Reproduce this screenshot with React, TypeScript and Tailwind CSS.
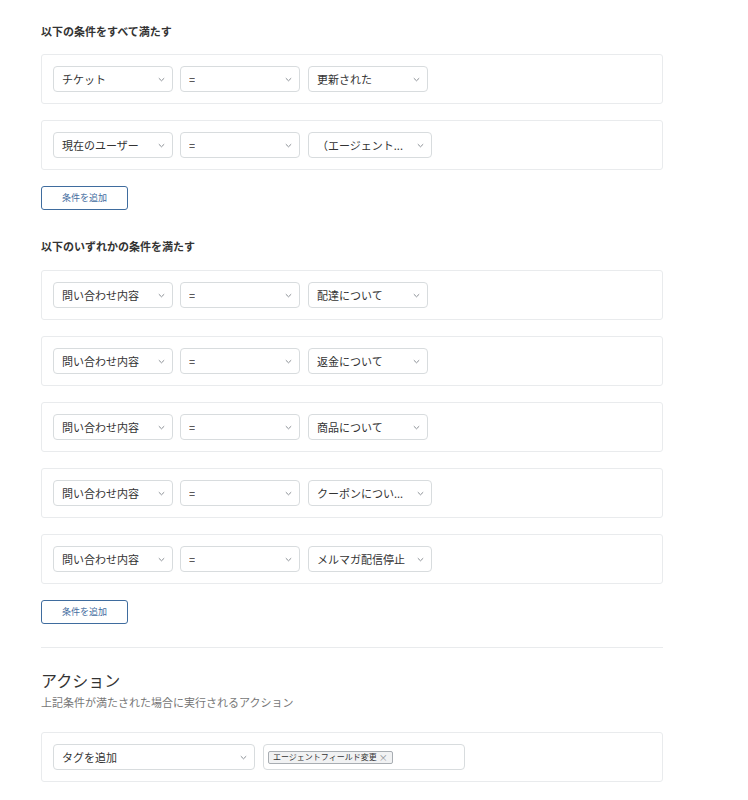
import React from "react";

const font = { fontFamily: '"Noto Sans CJK JP", "Noto Sans", sans-serif' };

function Chevron() {
  return (
    <svg width="7" height="5" viewBox="0 0 7 5" fill="none" className="shrink-0">
      <path d="M0.8 1.2 L3.5 3.8 L6.2 1.2" stroke="#8a8f94" strokeWidth="1" />
    </svg>
  );
}

function Select({ label, width, className = "" }: { label: string; width: string; className?: string }) {
  return (
    <div
      className={`flex h-[26px] items-center justify-between rounded-[4px] border border-[#d8dcde] bg-white pl-2 pr-[7px] text-[11px] text-[#333] ${width} ${className}`}
    >
      <span className="truncate leading-4">{label}</span>
      <Chevron />
    </div>
  );
}

function ConditionRow({ field, value, wide }: { field: string; value: string; wide?: boolean }) {
  return (
    <div className="flex items-center rounded-[3px] border border-[#e9ebed] bg-white px-[11px] py-[11px]">
      <Select label={field} width="w-[120px]" />
      <Select label="=" width="w-[120px]" className="ml-[7px]" />
      <Select label={value} width={wide ? "w-[124px]" : "w-[120px]"} className="ml-2" />
    </div>
  );
}

function AddButton() {
  return (
    <button className="flex h-[24px] w-[87px] items-center justify-center rounded-[3px] border border-[#3f6c9e] bg-white text-[9px] text-[#3f6c9e]">
      条件を追加
    </button>
  );
}

export default function App() {
  const all = [
    { field: "チケット", value: "更新された" },
    { field: "現在のユーザー", value: "（エージェント...", wide: true },
  ];
  const any = [
    { field: "問い合わせ内容", value: "配達について" },
    { field: "問い合わせ内容", value: "返金について" },
    { field: "問い合わせ内容", value: "商品について" },
    { field: "問い合わせ内容", value: "クーポンについ...", wide: true },
    { field: "問い合わせ内容", value: "メルマガ配信停止", wide: true },
  ];

  return (
    <div className="min-h-screen bg-white pl-[41px] pt-[23px]" style={font}>
      <div className="w-[622px]">
        <h3 className="mb-[15px] h-4 text-[11px] font-bold leading-4 text-[#333]">以下の条件をすべて満たす</h3>
        <div className="flex flex-col gap-4">
          {all.map((c, i) => (
            <ConditionRow key={i} {...c} />
          ))}
          <AddButton />
        </div>

        <h3 className="mb-4 mt-7 h-4 text-[11px] font-bold leading-4 text-[#333]">以下のいずれかの条件を満たす</h3>
        <div className="flex flex-col gap-4">
          {any.map((c, i) => (
            <ConditionRow key={i} {...c} />
          ))}
          <AddButton />
        </div>

        <div className="mt-[23px] border-t border-[#e9ebed]" />

        <h2 className="mt-[22px] text-[16px] leading-5 text-[#333]">アクション</h2>
        <p className="mt-1 text-[11px] leading-4 text-[#777]">上記条件が満たされた場合に実行されるアクション</p>

        <div className="mt-[22px] flex items-center rounded-[3px] border border-[#e9ebed] bg-white px-[11px] py-[11px]">
          <Select label="タグを追加" width="w-[202px]" />
          <div className="ml-2 flex h-[26px] w-[202px] items-center rounded-[4px] border border-[#d8dcde] bg-white px-[4px]">
            <span className="flex h-[13px] items-center gap-[2px] rounded-[2px] border border-[#a8adb2] bg-[#f1f2f3] px-[4px] text-[8px] leading-none text-[#333]">
              エージェントフィールド変更
              <span className="text-[9px] text-[#8a8f94]">×</span>
            </span>
          </div>
        </div>
      </div>
    </div>
  );
}
